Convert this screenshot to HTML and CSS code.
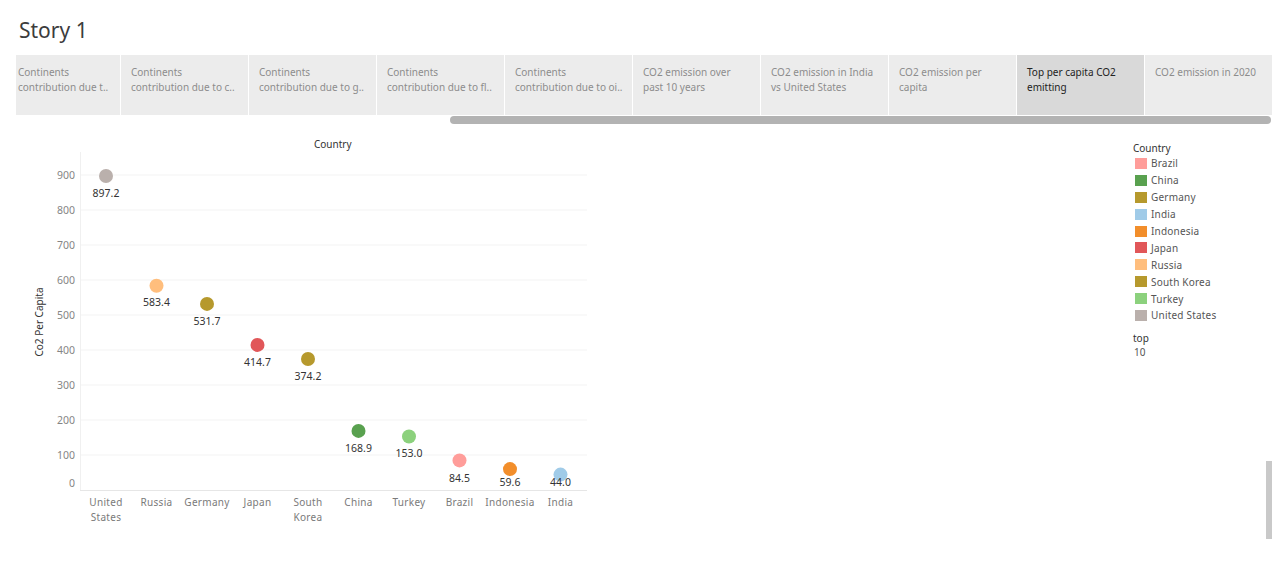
FILE: index.html
```html
<!DOCTYPE html>
<html>
<head>
<meta charset="utf-8">
<link rel="stylesheet" href="styles.css">
</head>
<body>
<header class="story-head">
  <h1 class="story-title">Story 1</h1>
</header>
<nav class="tabs">
  <div class="tab tab-first"><span>Continents</span><span>contribution due t..</span></div>
  <div class="tab"><span>Continents</span><span>contribution due to c..</span></div>
  <div class="tab"><span>Continents</span><span>contribution due to g..</span></div>
  <div class="tab"><span>Continents</span><span>contribution due to fl..</span></div>
  <div class="tab"><span>Continents</span><span>contribution due to oi..</span></div>
  <div class="tab"><span>CO2 emission over</span><span>past 10 years</span></div>
  <div class="tab"><span>CO2 emission in India</span><span>vs United States</span></div>
  <div class="tab"><span>CO2 emission per</span><span>capita</span></div>
  <div class="tab tab-active"><span>Top per capita CO2</span><span>emitting</span></div>
  <div class="tab"><span>CO2 emission in 2020</span></div>
</nav>
<div class="hscroll"><div class="hthumb"></div></div>
<main class="main">
  <svg class="chart" width="600" height="420" viewBox="0 130 600 420" xmlns="http://www.w3.org/2000/svg">
    <text class="col-head" x="314" y="144">Country</text>
    <line class="axis" x1="80.5" y1="152" x2="80.5" y2="490"/>
    <g class="grid">
      <line x1="81" y1="175" x2="587" y2="175"/>
      <line x1="81" y1="210" x2="587" y2="210"/>
      <line x1="81" y1="245" x2="587" y2="245"/>
      <line x1="81" y1="280" x2="587" y2="280"/>
      <line x1="81" y1="315" x2="587" y2="315"/>
      <line x1="81" y1="350" x2="587" y2="350"/>
      <line x1="81" y1="385" x2="587" y2="385"/>
      <line x1="81" y1="420" x2="587" y2="420"/>
      <line x1="81" y1="455" x2="587" y2="455"/>
    </g>
    <line class="axis-x" x1="80" y1="490.5" x2="587" y2="490.5"/>
    <g class="ytick">
      <text x="75" y="175">900</text>
      <text x="75" y="210">800</text>
      <text x="75" y="245">700</text>
      <text x="75" y="280">600</text>
      <text x="75" y="315">500</text>
      <text x="75" y="350">400</text>
      <text x="75" y="385">300</text>
      <text x="75" y="420">200</text>
      <text x="75" y="455">100</text>
      <text x="75" y="483">0</text>
    </g>
    <text class="ytitle" transform="translate(39 322) rotate(-90)">Co2 Per Capita</text>
    <g class="dots">
      <circle cx="106" cy="176" r="7" fill="#bab0ac"/>
      <circle cx="156.5" cy="285.8" r="7" fill="#ffbe7d"/>
      <circle cx="207" cy="303.9" r="7" fill="#b6992d"/>
      <circle cx="257.5" cy="344.9" r="7" fill="#e15759"/>
      <circle cx="308" cy="359" r="7" fill="#b6992d"/>
      <circle cx="358.5" cy="430.9" r="7" fill="#59a14f"/>
      <circle cx="409" cy="436.5" r="7" fill="#8cd17d"/>
      <circle cx="459.5" cy="460.4" r="7" fill="#ff9d9a"/>
      <circle cx="510" cy="469.1" r="7" fill="#f28e2b"/>
      <circle cx="560.5" cy="474.6" r="7" fill="#a0cbe8"/>
    </g>
    <g class="vlabel">
      <text x="106" y="192.5">897.2</text>
      <text x="156.5" y="302">583.4</text>
      <text x="207" y="320.5">531.7</text>
      <text x="257.5" y="361.5">414.7</text>
      <text x="308" y="375.5">374.2</text>
      <text x="358.5" y="448">168.9</text>
      <text x="409" y="453">153.0</text>
      <text x="459.5" y="477.5">84.5</text>
      <text x="510" y="482">59.6</text>
      <text x="560.5" y="482">44.0</text>
    </g>
    <g class="xlabel">
      <text x="106" y="501.5">United</text>
      <text x="106" y="516.5">States</text>
      <text x="156.5" y="501.5">Russia</text>
      <text x="207" y="501.5">Germany</text>
      <text x="257.5" y="501.5">Japan</text>
      <text x="308" y="501.5">South</text>
      <text x="308" y="516.5">Korea</text>
      <text x="358.5" y="501.5">China</text>
      <text x="409" y="501.5">Turkey</text>
      <text x="459.5" y="501.5">Brazil</text>
      <text x="510" y="501.5">Indonesia</text>
      <text x="560.5" y="501.5">India</text>
    </g>
  </svg>
  <aside class="legend">
    <div class="legend-title">Country</div>
    <ul class="legend-list">
      <li><i class="sw sw-brazil"></i>Brazil</li>
      <li><i class="sw sw-china"></i>China</li>
      <li><i class="sw sw-germany"></i>Germany</li>
      <li><i class="sw sw-india"></i>India</li>
      <li><i class="sw sw-indonesia"></i>Indonesia</li>
      <li><i class="sw sw-japan"></i>Japan</li>
      <li><i class="sw sw-russia"></i>Russia</li>
      <li><i class="sw sw-skorea"></i>South Korea</li>
      <li><i class="sw sw-turkey"></i>Turkey</li>
      <li><i class="sw sw-us"></i>United States</li>
    </ul>
    <div class="param-title">top</div>
    <div class="param-value">10</div>
  </aside>
  <div class="vscroll"></div>
</main>
</body>
</html>
```
FILE: styles.css
```css
* { box-sizing: border-box; }
html, body {
  margin: 0;
  padding: 0;
  background: #ffffff;
  font-family: "Noto Sans", "DejaVu Sans", sans-serif;
  color: #333333;
}
body {
  width: 1280px;
  height: 573px;
  overflow: hidden;
  position: relative;
}
.story-head {
  height: 55px;
  padding: 18px 0 0 19px;
}
.story-title {
  margin: 0;
  font-size: 21px;
  line-height: 25px;
  font-weight: normal;
  color: #3c3c3c;
}
.tabs {
  display: flex;
  gap: 1px;
  margin-left: 16px;
  width: 1256px;
  height: 60px;
  background: #ffffff;
}
.tab {
  flex: 0 0 127px;
  background: #ececec;
  padding: 10px 0 0 10px;
  display: flex;
  flex-direction: column;
  font-size: 10px;
  line-height: 15px;
  color: #8c8c8c;
  white-space: nowrap;
  overflow: hidden;
}
.tab-first {
  flex-basis: 104px;
  padding-left: 2px;
}
.tab-active {
  background: #d9d9d9;
  color: #222222;
}
.hscroll {
  margin: 1px 0 0 450px;
  width: 821px;
  height: 8px;
}
.hthumb {
  width: 100%;
  height: 100%;
  border-radius: 4px;
  background: #b3b3b3;
}
.main {
  display: flex;
  align-items: flex-start;
  margin-top: 6px;
}
.chart {
  display: block;
  flex: 0 0 600px;
  font-family: "Noto Sans", "DejaVu Sans", sans-serif;
}
.col-head {
  font-size: 10px;
  fill: #333333;
  dominant-baseline: central;
}
.axis { stroke: #f0f0f0; stroke-width: 1; }
.axis-x { stroke: #e6e6e6; stroke-width: 1; }
.grid line { stroke: #f3f3f3; stroke-width: 1; }
.ytick text {
  font-size: 10.5px;
  fill: #858585;
  text-anchor: end;
  dominant-baseline: central;
}
.ytitle {
  font-size: 10px;
  fill: #333333;
  text-anchor: middle;
  dominant-baseline: central;
}
.vlabel text {
  font-size: 10.5px;
  fill: #333333;
  text-anchor: middle;
  dominant-baseline: central;
}
.xlabel text {
  font-size: 10px;
  fill: #7a7a7a;
  text-anchor: middle;
  dominant-baseline: central;
  letter-spacing: 0.3px;
}
.legend {
  margin: 11px 0 0 533px;
  font-size: 10px;
  color: #555555;
}
.legend-title {
  line-height: 14px;
  color: #333333;
}
.legend-list {
  list-style: none;
  margin: 0;
  padding: 0 0 0 2px;
}
.legend-list li {
  display: flex;
  align-items: center;
  height: 16.9px;
  gap: 4px;
  letter-spacing: 0.2px;
}
.sw {
  display: inline-block;
  width: 12px;
  height: 11px;
}
.sw-brazil { background: #ff9d9a; }
.sw-china { background: #59a14f; }
.sw-germany { background: #b6992d; }
.sw-india { background: #a0cbe8; }
.sw-indonesia { background: #f28e2b; }
.sw-japan { background: #e15759; }
.sw-russia { background: #ffbe7d; }
.sw-skorea { background: #b6992d; }
.sw-turkey { background: #8cd17d; }
.sw-us { background: #bab0ac; }
.param-title {
  margin-top: 7px;
  line-height: 14px;
  color: #333333;
}
.param-value {
  line-height: 14px;
  padding-left: 1px;
  color: #555555;
}
.vscroll {
  position: absolute;
  left: 1266px;
  top: 461px;
  width: 6px;
  height: 78px;
  background: #c9c9c9;
}
```
